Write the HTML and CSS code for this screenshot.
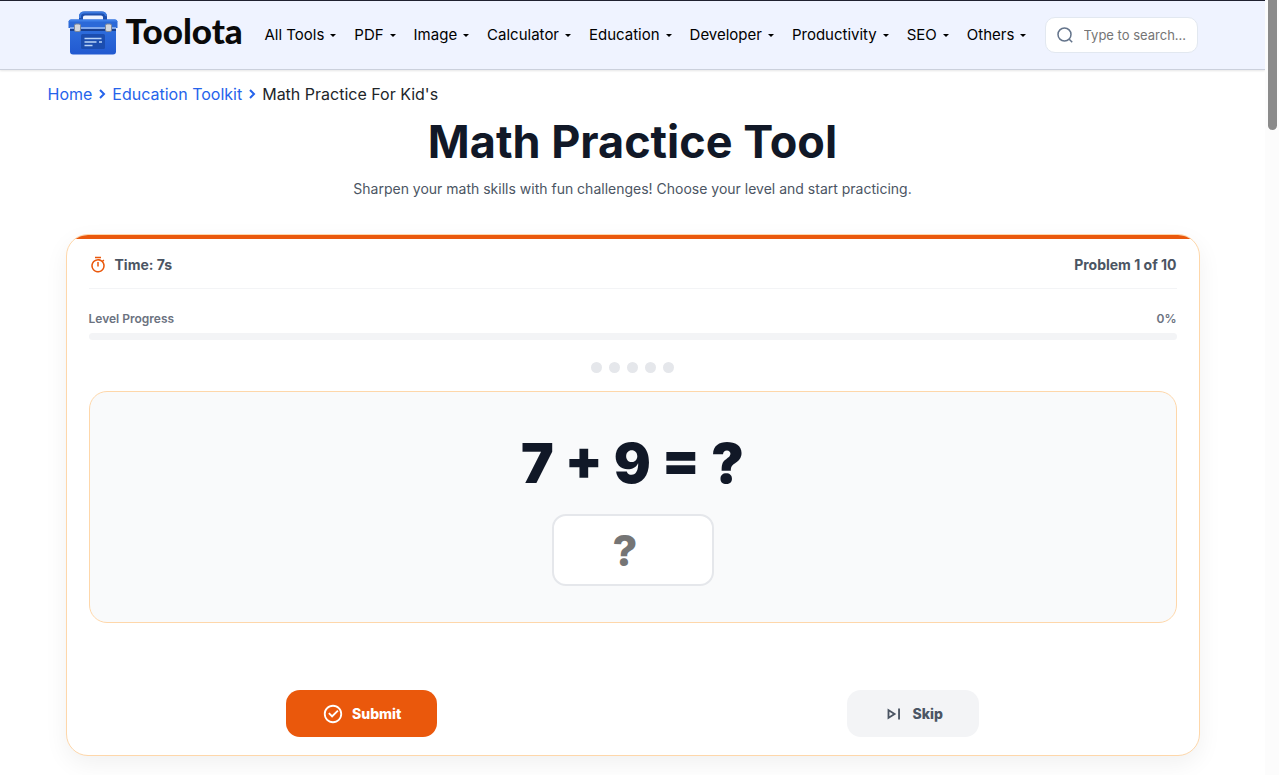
FILE: index.html
```html
<!DOCTYPE html>
<html lang="en">
<head>
    <meta charset="UTF-8">
    <meta name="viewport" content="width=device-width, initial-scale=1.0">
    <title>Math Practice Tool</title>
    <link rel="stylesheet" href="styles.css">
</head>
<body>
    <div class="page">
        <header class="site-header">
            <div class="header-inner">
                <a class="logo" href="#">
                    <svg class="logo-icon" viewBox="0 0 50 44" aria-hidden="true">
                        <defs>
                            <linearGradient id="boxBlue" x1="0" y1="0" x2="0" y2="1">
                                <stop offset="0" stop-color="#2f70de"/>
                                <stop offset="1" stop-color="#2259d0"/>
                            </linearGradient>
                        </defs>
                        <path d="M13 9V6q0-3.500 4-3.500h16q4 0 4 3.500v3" fill="none" stroke="#1e4fae" stroke-width="4"/>
                        <path d="M12 7V5Q12.500 1.500 16 1.500h18q3.500 0 4 3.500" fill="none" stroke="#3a79e0" stroke-width="2"/>
                        <rect x="2" y="15" width="46" height="28.500" rx="3" fill="url(#boxBlue)"/>
                        <path d="M3 8.500h44q2 0 2.500 2V17H.5v-6.500q.5-2 2.500-2z" fill="#2b69d8"/>
                        <path d="M3 8.500h44q2 0 2.500 2H.5q.5-2 2.500-2z" fill="#3f80e8"/>
                        <path d="M2 19h46" stroke="#173f91" stroke-width="2"/>
                        <path d="M2 17h46" stroke="#9dbdf2" stroke-width="1.500"/>
                        <rect x="6.500" y="13" width="6" height="7.500" rx="1.500" fill="#d5d8dd" stroke="#7d8798"/>
                        <rect x="37.500" y="13" width="6" height="7.500" rx="1.500" fill="#d5d8dd" stroke="#7d8798"/>
                        <rect x="13" y="23" width="24" height="15" rx="1.500" fill="#1b4daf"/>
                        <path d="M16.500 27.500h17M16.500 31h12M31 31h3M16.500 34.500h8" stroke="#b9d4f7" stroke-width="1.500"/>
                    </svg>
                    <span class="logo-text">Toolota</span>
                </a>
                <nav class="main-nav">
                    <a href="#">All Tools</a>
                    <a href="#">PDF</a>
                    <a href="#">Image</a>
                    <a href="#">Calculator</a>
                    <a href="#">Education</a>
                    <a href="#">Developer</a>
                    <a href="#">Productivity</a>
                    <a href="#">SEO</a>
                    <a href="#">Others</a>
                </nav>
                <label class="search">
                    <svg viewBox="0 0 18 18" aria-hidden="true">
                        <circle cx="8.500" cy="8.500" r="6.500"/>
                        <path d="M13.200 13.200l3 3"/>
                    </svg>
                    <input type="text" placeholder="Type to search..." aria-label="Search">
                </label>
            </div>
        </header>

        <nav class="breadcrumb">
            <a href="#">Home</a>
            <svg viewBox="0 0 8 10" aria-hidden="true"><path d="M2 1l4 4-4 4"/></svg>
            <a href="#">Education Toolkit</a>
            <svg viewBox="0 0 8 10" aria-hidden="true"><path d="M2 1l4 4-4 4"/></svg>
            <span>Math Practice For Kid's</span>
        </nav>

        <main>
            <h1>Math Practice Tool</h1>
            <p class="subtitle">Sharpen your math skills with fun challenges! Choose your level and start practicing.</p>

            <section class="card">
                <div class="stats">
                    <div class="timer">
                        <svg viewBox="0 0 24 24" aria-hidden="true"><path d="M17.618 5.968l1.453-1.453 1.414 1.414-1.453 1.453a9 9 0 1 1-1.414-1.414zM12 20a7 7 0 1 0 0-14 7 7 0 0 0 0 14zM11 8h2v6h-2V8zM8 1h8v2H8V1z"/></svg>
                        <span>Time: <span id="time">7</span>s</span>
                    </div>
                    <div>Problem 1 of 10</div>
                </div>

                <div class="progress-label">
                    <span>Level Progress</span>
                    <span>0%</span>
                </div>
                <div class="progress-bar"></div>

                <div class="dots">
                    <span></span>
                    <span></span>
                    <span></span>
                    <span></span>
                    <span></span>
                </div>

                <div class="problem">
                    <div class="expression">7 + 9 = ?</div>
                    <input class="answer" type="number" placeholder="?" aria-label="Your answer">
                </div>

                <div class="actions">
                    <button class="button submit" type="button">
                        <svg viewBox="0 0 24 24" aria-hidden="true"><path d="M12 22C6.477 22 2 17.523 2 12S6.477 2 12 2s10 4.477 10 10-4.477 10-10 10zm0-2a8 8 0 1 0 0-16 8 8 0 0 0 0 16zm-.997-4L6.760 11.757l1.414-1.414 2.829 2.829 5.656-5.657 1.415 1.414L11.003 16z"/></svg>
                        Submit
                    </button>
                    <button class="button skip" type="button">
                        <svg viewBox="0 0 24 24" aria-hidden="true"><path fill-rule="evenodd" d="M5 6l9.500 6L5 18zM7 9.600v4.800l3.800-2.400zM16.500 6h2v12h-2z"/></svg>
                        Skip
                    </button>
                </div>
            </section>
        </main>
    </div>
    <div class="scrollbar"><div class="thumb"></div></div>
</body>
</html>
```
FILE: styles.css
```css
* {
    box-sizing: border-box;
}
body {
    margin: 0;
    min-height: 100vh;
    display: flex;
    background-color: #fff;
    color: #111827;
    font-family: Inter, "Liberation Sans", sans-serif;
}
a {
    text-decoration: none;
}
.page {
    flex: 1;
    min-width: 0;
}

/* Header */
.site-header {
    height: 70px;
    border-top: 1px solid #1f2130;
    border-bottom: 1px solid #cbd0dc;
    background-color: #eff3ff;
    box-shadow: 0 1px 2px rgba(0, 0, 0, 0.1);
}
.header-inner {
    max-width: 1130px;
    height: 100%;
    margin: 0 auto;
    display: flex;
    align-items: center;
}
.logo {
    display: flex;
    align-items: center;
    gap: 8px;
    width: 197px;
    padding-bottom: 4px;
    color: #0a0a0a;
}
.logo-icon {
    width: 50px;
    height: 44px;
}
.logo-text {
    padding-bottom: 6px;
    font-family: Lato, sans-serif;
    font-size: 35px;
    line-height: 44px;
    font-weight: 900;
}
.main-nav {
    flex: 1;
    display: flex;
    justify-content: space-between;
    margin-right: 18px;
}
.main-nav a {
    display: flex;
    align-items: center;
    gap: 6px;
    color: #000;
    font-size: 15px;
    line-height: 24px;
}
.main-nav a::after {
    content: "";
    border: 3px solid transparent;
    border-top-color: #000;
    border-bottom: 0;
}
.search {
    display: flex;
    align-items: center;
    gap: 10px;
    width: 153px;
    height: 36px;
    padding: 0 10px;
    border: 1px solid #e2e8f0;
    border-radius: 10px;
    background-color: #fff;
}
.search svg {
    flex: none;
    width: 18px;
    height: 18px;
    fill: none;
    stroke: #64748b;
    stroke-width: 1.5;
}
.search input {
    width: 100%;
    min-width: 0;
    padding: 0;
    border: 0;
    outline: 0;
    background: none;
    font-family: inherit;
    font-size: 13px;
}
.search input::placeholder {
    color: #757575;
}

/* Breadcrumb */
.breadcrumb {
    max-width: 1170px;
    margin: 12px auto 0;
    display: flex;
    align-items: center;
    gap: 6px;
    color: #212529;
    font-size: 16px;
    line-height: 24px;
}
.breadcrumb a {
    color: #2563eb;
}
.breadcrumb svg {
    width: 8px;
    height: 10px;
    fill: none;
    stroke: #2563eb;
    stroke-width: 2;
}

/* Tool */
main {
    max-width: 1134px;
    margin: 0 auto;
    padding-bottom: 19px;
}
h1 {
    margin: 8px 0 0;
    font-size: 45px;
    line-height: 56px;
    font-weight: 700;
    text-align: center;
}
.subtitle {
    margin: 8px 0 34px;
    color: #4b5563;
    font-size: 14px;
    line-height: 22px;
    text-align: center;
}
.card {
    position: relative;
    padding: 18px 22px;
    border: 1px solid #fed7aa;
    border-radius: 22px;
    background-color: #fff;
    box-shadow: 0 8px 24px rgba(0, 0, 0, 0.06);
    overflow: hidden;
}
.card::before {
    content: "";
    position: absolute;
    top: 0;
    left: 0;
    right: 0;
    height: 4px;
    background-color: #ea580c;
}
.stats {
    display: flex;
    justify-content: space-between;
    padding-bottom: 11px;
    border-bottom: 1px solid #f3f4f6;
    color: #4b5563;
    font-size: 14px;
    line-height: 24px;
    font-weight: 700;
}
.timer {
    display: flex;
    align-items: center;
    gap: 8px;
}
.timer svg {
    width: 18px;
    height: 18px;
    fill: #ea580c;
}
.progress-label {
    display: flex;
    justify-content: space-between;
    margin: 22px 0 6px;
    color: #6b7280;
    font-size: 12px;
    line-height: 16px;
    font-weight: 600;
}
.progress-bar {
    height: 7px;
    border-radius: 4px;
    background-color: #f3f4f6;
}
.dots {
    display: flex;
    justify-content: center;
    gap: 7px;
    margin: 22px 0 18px;
}
.dots span {
    width: 11px;
    height: 11px;
    border-radius: 50%;
    background-color: #e5e7eb;
}
.problem {
    display: flex;
    flex-direction: column;
    align-items: center;
    padding: 36px 22px;
    border: 1px solid #fed7aa;
    border-radius: 18px;
    background-color: #f9fafb;
}
.expression {
    margin-bottom: 16px;
    font-size: 55px;
    line-height: 70px;
    font-weight: 900;
}
.answer {
    width: 162px;
    height: 72px;
    padding: 0 14px;
    border: 2px solid #e5e7eb;
    border-radius: 14px;
    background-color: #fff;
    font-family: inherit;
    font-size: 43px;
    font-weight: 800;
    text-align: center;
}
.answer::placeholder {
    color: #757575;
}
.actions {
    display: flex;
    justify-content: space-around;
    gap: 14px;
    margin-top: 67px;
}
.button {
    display: flex;
    align-items: center;
    gap: 8px;
    height: 47px;
    padding: 0 36px;
    border: 0;
    border-radius: 14px;
    font-family: inherit;
    font-size: 14px;
    font-weight: 800;
    cursor: pointer;
}
.button svg {
    width: 22px;
    height: 22px;
    fill: currentColor;
}
.submit {
    background-color: #ea580c;
    color: #fff;
}
.skip {
    background-color: #f3f4f6;
    color: #4b5563;
}

/* Scrollbar */
.scrollbar {
    width: 14px;
    padding: 0 2px 0 3px;
    background-color: #fcfcfc;
}
.thumb {
    height: 130px;
    border-radius: 0 0 5px 5px;
    background-color: #8b8b8b;
}
```
